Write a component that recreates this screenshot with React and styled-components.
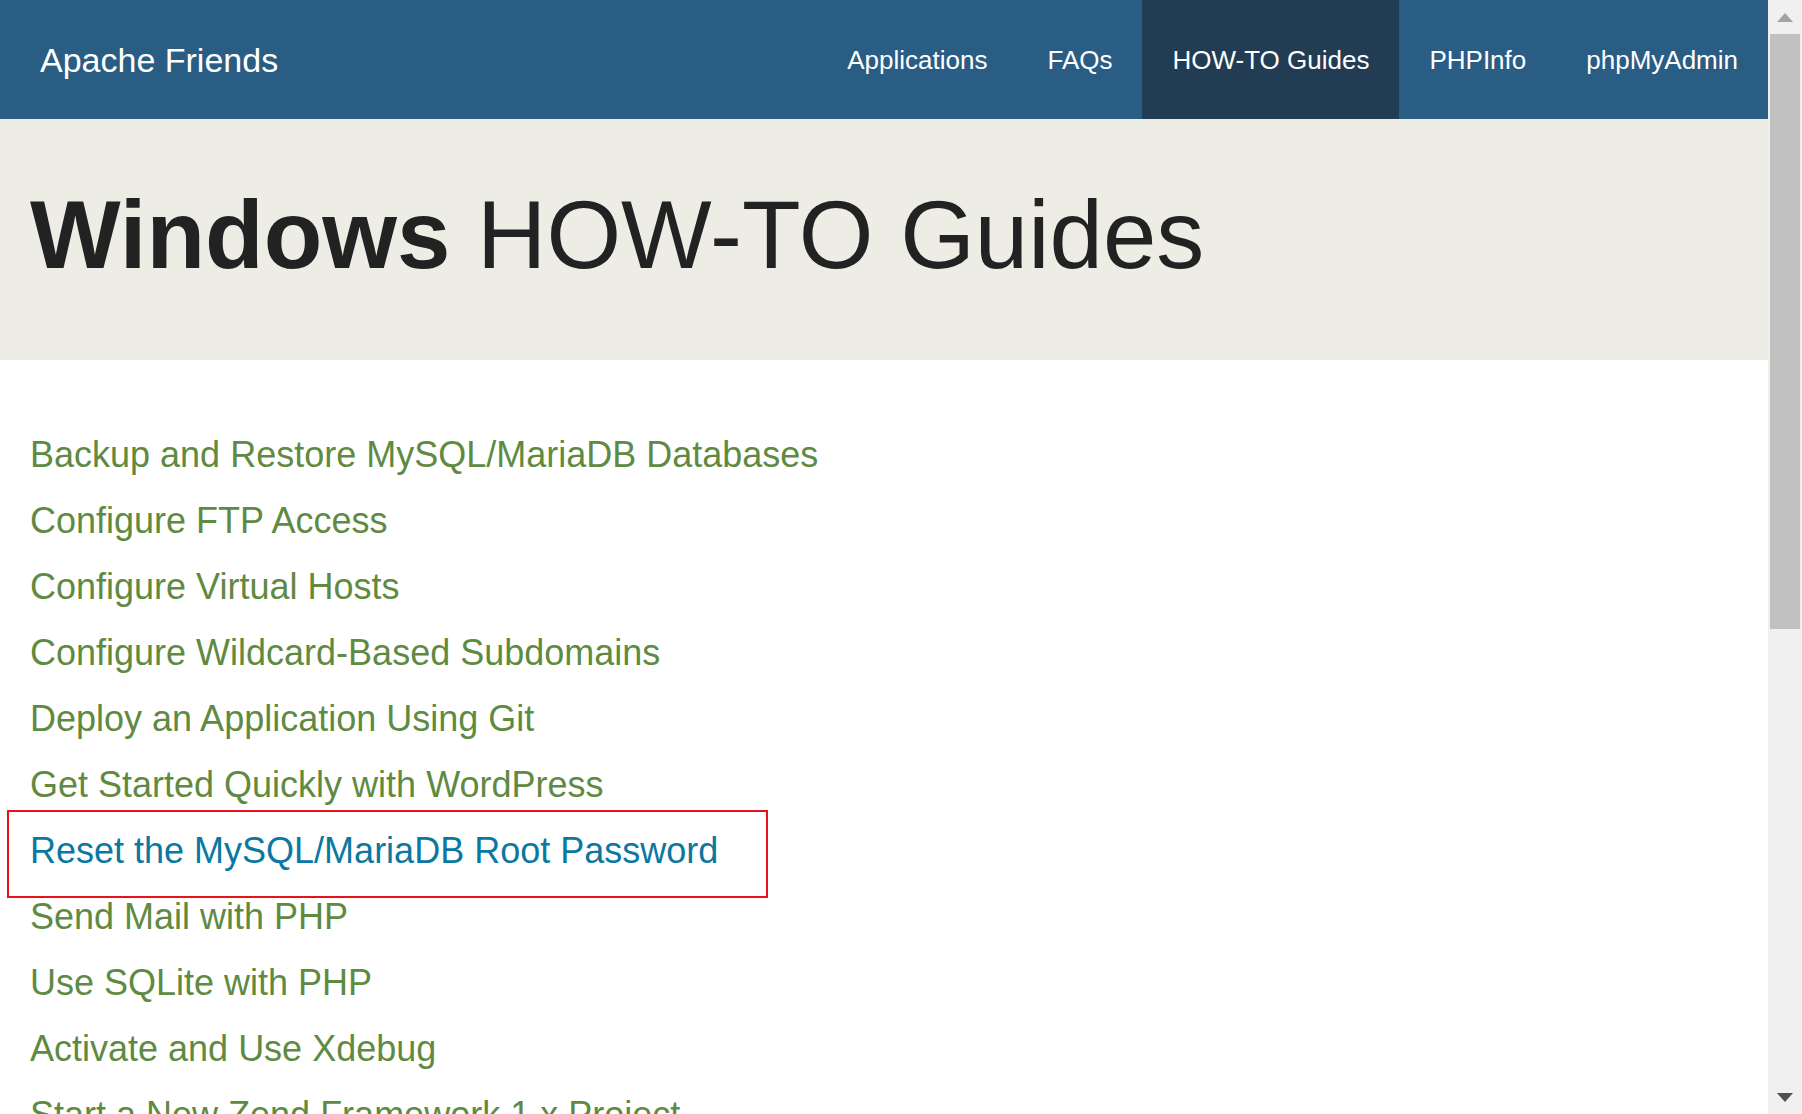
import React from "react";
import styled, { createGlobalStyle } from "styled-components";

const GlobalStyle = createGlobalStyle`
  html, body {
    margin: 0;
    padding: 0;
    height: 100%;
    overflow: hidden;
  }
  body {
    font-family: "Liberation Sans", Arial, sans-serif;
    background: #fff;
  }
`;

const Page = styled.div`
  display: flex;
  flex-direction: row;
  width: 100vw;
  height: 100vh;
  overflow: hidden;
`;

const Main = styled.div`
  flex: 1;
  min-width: 0;
  display: flex;
  flex-direction: column;
  overflow: hidden;
`;

const Topbar = styled.nav`
  display: flex;
  flex-direction: row;
  align-items: stretch;
  justify-content: space-between;
  height: 119px;
  background: #2a5d83;
  flex-shrink: 0;
`;

const Brand = styled.a`
  display: flex;
  align-items: center;
  padding: 2px 0 0 40px;
  font-size: 34px;
  color: #fff;
  text-decoration: none;
`;

const Menu = styled.ul`
  display: flex;
  flex-direction: row;
  margin: 0;
  padding: 0;
  list-style: none;
`;

const MenuItem = styled.li`
  display: flex;
  align-items: center;
  padding: 2px 30px 0;
  font-size: 26px;
  color: #fff;
  background: ${(p) => (p.$active ? "#213c53" : "transparent")};
  cursor: pointer;
`;

const Hero = styled.header`
  flex-shrink: 0;
  height: 241px;
  box-sizing: border-box;
  padding: 58px 30px 0;
  background: #eeede5;
`;

const Title = styled.h1`
  margin: 0;
  font-size: 96px;
  line-height: 115px;
  font-weight: 400;
  color: #222;
  white-space: nowrap;

  strong {
    font-weight: 700;
  }
`;

const Guides = styled.ul`
  margin: 62px 0 0;
  padding: 0 30px;
  list-style: none;
`;

const Guide = styled.li`
  position: relative;
  font-size: 36px;
  line-height: 66px;
  white-space: nowrap;

  a {
    color: ${(p) => (p.$hover ? "#0a78a0" : "#5f8a42")};
    text-decoration: none;
  }

  ${(p) =>
    p.$marked &&
    `
    &::after {
      content: "";
      position: absolute;
      left: -23px;
      top: -8px;
      width: 761px;
      height: 88px;
      box-sizing: border-box;
      border: 2px solid #e8121a;
      pointer-events: none;
    }
  `}
`;

const Scrollbar = styled.div`
  width: 34px;
  flex-shrink: 0;
  display: flex;
  flex-direction: column;
  align-items: center;
  background: #f0f0f0;
`;

const ArrowBox = styled.div`
  height: 34px;
  width: 34px;
  display: flex;
  align-items: center;
  justify-content: center;
  flex-shrink: 0;
`;

const Track = styled.div`
  flex: 1;
  width: 100%;
  display: flex;
  flex-direction: column;
  align-items: center;
`;

const Thumb = styled.div`
  width: 30px;
  height: 595px;
  background: #c1c1c1;
`;

const Arrow = ({ up, color }) => (
  <svg width="16" height="9" viewBox="0 0 16 9">
    <polygon
      points={up ? "8,0 16,9 0,9" : "0,0 16,0 8,9"}
      fill={color}
    />
  </svg>
);

const guides = [
  "Backup and Restore MySQL/MariaDB Databases",
  "Configure FTP Access",
  "Configure Virtual Hosts",
  "Configure Wildcard-Based Subdomains",
  "Deploy an Application Using Git",
  "Get Started Quickly with WordPress",
  "Reset the MySQL/MariaDB Root Password",
  "Send Mail with PHP",
  "Use SQLite with PHP",
  "Activate and Use Xdebug",
  "Start a New Zend Framework 1.x Project",
  "Start a New Zend Framework 2.x Project",
  "Transfer Files with FTP",
];

const menu = ["Applications", "FAQs", "HOW-TO Guides", "PHPInfo", "phpMyAdmin"];

const App = () => {
  return (
    <Page>
      <GlobalStyle />
      <Main>
        <Topbar>
          <Brand href="#">Apache Friends</Brand>
          <Menu>
            {menu.map((item) => (
              <MenuItem key={item} $active={item === "HOW-TO Guides"}>
                {item}
              </MenuItem>
            ))}
          </Menu>
        </Topbar>
        <Hero>
          <Title>
            <strong>Windows</strong> HOW-TO Guides
          </Title>
        </Hero>
        <Guides>
          {guides.map((g) => {
            const marked = g.startsWith("Reset");
            return (
              <Guide key={g} $hover={marked} $marked={marked}>
                <a href="#">{g}</a>
              </Guide>
            );
          })}
        </Guides>
      </Main>
      <Scrollbar>
        <ArrowBox>
          <Arrow up color="#a3a3a3" />
        </ArrowBox>
        <Track>
          <Thumb />
        </Track>
        <ArrowBox>
          <Arrow color="#505050" />
        </ArrowBox>
      </Scrollbar>
    </Page>
  );
};

export default App;
